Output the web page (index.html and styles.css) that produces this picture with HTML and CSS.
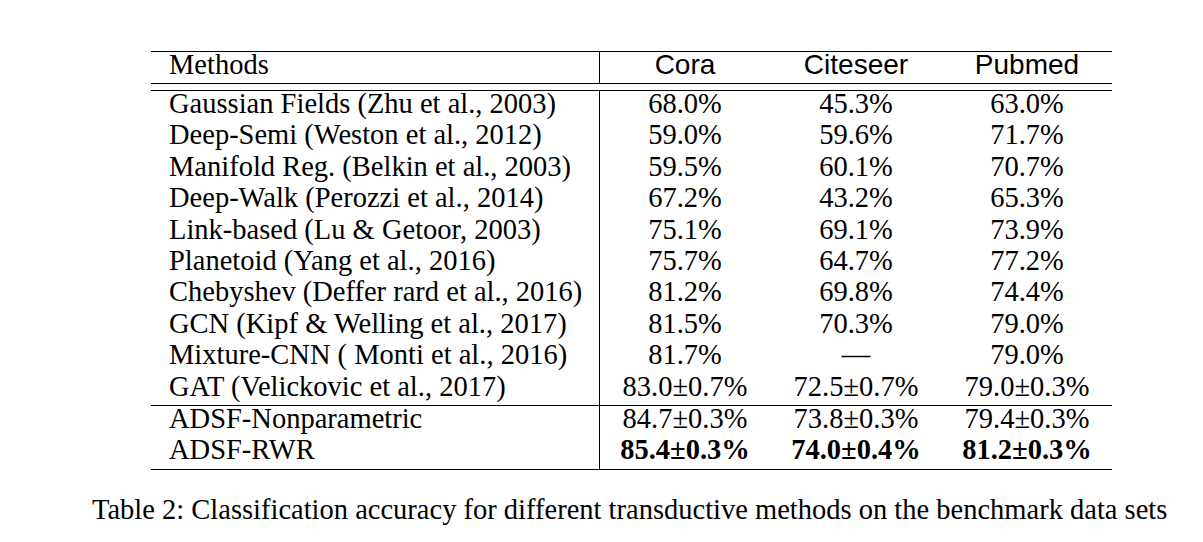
FILE: index.html
```html
<!DOCTYPE html>
<html>
<head>
<meta charset="utf-8">
<link rel="stylesheet" href="styles.css">
</head>
<body>
<div class="page">
  <div class="tbl">
    <div class="row head">
      <div class="cell method">Methods</div>
      <div class="cell val sans first">Cora</div>
      <div class="cell val sans">Citeseer</div>
      <div class="cell val sans">Pubmed</div>
    </div>
    <div class="group g1">
      <div class="row"><div class="cell method">Gaussian Fields (Zhu et al., 2003)</div><div class="cell val first">68.0%</div><div class="cell val">45.3%</div><div class="cell val">63.0%</div></div>
      <div class="row"><div class="cell method">Deep-Semi (Weston et al., 2012)</div><div class="cell val first">59.0%</div><div class="cell val">59.6%</div><div class="cell val">71.7%</div></div>
      <div class="row"><div class="cell method">Manifold Reg. (Belkin et al., 2003)</div><div class="cell val first">59.5%</div><div class="cell val">60.1%</div><div class="cell val">70.7%</div></div>
      <div class="row"><div class="cell method">Deep-Walk (Perozzi et al., 2014)</div><div class="cell val first">67.2%</div><div class="cell val">43.2%</div><div class="cell val">65.3%</div></div>
      <div class="row"><div class="cell method">Link-based (Lu &amp; Getoor, 2003)</div><div class="cell val first">75.1%</div><div class="cell val">69.1%</div><div class="cell val">73.9%</div></div>
      <div class="row"><div class="cell method">Planetoid (Yang et al., 2016)</div><div class="cell val first">75.7%</div><div class="cell val">64.7%</div><div class="cell val">77.2%</div></div>
      <div class="row"><div class="cell method">Chebyshev (Deffer rard et al., 2016)</div><div class="cell val first">81.2%</div><div class="cell val">69.8%</div><div class="cell val">74.4%</div></div>
      <div class="row"><div class="cell method">GCN (Kipf &amp; Welling et al., 2017)</div><div class="cell val first">81.5%</div><div class="cell val">70.3%</div><div class="cell val">79.0%</div></div>
      <div class="row"><div class="cell method">Mixture-CNN ( Monti et al., 2016)</div><div class="cell val first">81.7%</div><div class="cell val">—</div><div class="cell val">79.0%</div></div>
      <div class="row"><div class="cell method">GAT (Velickovic et al., 2017)</div><div class="cell val first">83.0±0.7%</div><div class="cell val">72.5±0.7%</div><div class="cell val">79.0±0.3%</div></div>
    </div>
    <div class="group g2">
      <div class="row"><div class="cell method">ADSF-Nonparametric</div><div class="cell val first">84.7±0.3%</div><div class="cell val">73.8±0.3%</div><div class="cell val">79.4±0.3%</div></div>
      <div class="row"><div class="cell method">ADSF-RWR</div><div class="cell val first bold">85.4±0.3%</div><div class="cell val bold">74.0±0.4%</div><div class="cell val bold">81.2±0.3%</div></div>
    </div>
  </div>
  <p class="caption">Table 2: Classification accuracy for different transductive methods on the benchmark data sets</p>
</div>
</body>
</html>
```
FILE: styles.css
```css
html, body {
  margin: 0;
  padding: 0;
  background: #ffffff;
}
body {
  font-family: "Liberation Serif", "Times New Roman", serif;
  color: #000000;
  font-size: 28.5px;
}
.page {
  padding: 51px 0 20px 92px;
}
.tbl {
  margin-left: 59px;
  width: 961px;
}
.row {
  display: grid;
  grid-template-columns: 448px 171px 172px 170px;
  height: 31.4px;
}
.head {
  border-top: 1px solid #000;
  border-bottom: 1px solid #000;
  height: 31px;
}
.group {
  border-top: 1px solid #000;
}
.g1 {
  margin-top: 6px;
}
.g2 {
  border-bottom: 1px solid #000;
}
.cell {
  line-height: 25px;
  white-space: nowrap;
}
.method {
  padding-left: 18px;
}
.val {
  text-align: center;
}
.first {
  border-left: 1px solid #000;
}
.sans {
  font-family: "Liberation Sans", Arial, sans-serif;
  font-size: 28px;
}
.bold {
  font-weight: bold;
}
.caption {
  margin: 27px 0 0 0;
  padding-bottom: 4px;
  line-height: 25px;
  white-space: nowrap;
}
```
